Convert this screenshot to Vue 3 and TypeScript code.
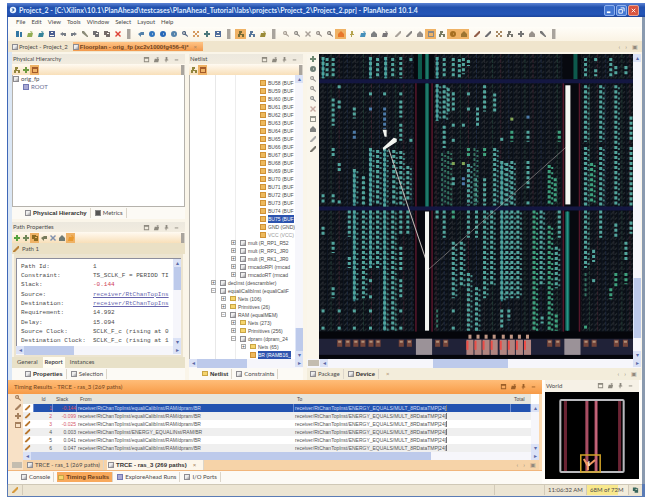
<script setup lang="ts">
type Tool = [icon: string, color: string, on?: boolean]
type Seg = [x: number, y1: number, y2: number, kind?: string]

const glyphs: Record<string, string> = {
  doc: 'M1 1h3v6H1zM5 2h2v5H5z',
  open: 'M1 7l1-4h5L6 7zM4 1l3 1-2 1z',
  save: 'M1 1h6v6H1zM3 2v1h2V2zM2 5v1h4V5z',
  undo: 'M1 4l3-2v1h3v3H5V5H4v1z',
  redo: 'M7 4L4 2v1H1v3h2V5h1v1z',
  pen: 'M1 1h2l4 5v1H6L1 3z',
  copy: 'M1 1h4v1h2v5H3V5H1zM4 3v1h2V3z',
  x: 'M1 2l1-1 2 2 2-2 1 1-2 2 2 2-1 1-2-2-2 2-1-1 2-2z',
  ball: 'M4 1a3 3 0 100 6 3 3 0 000-6zM4 3l1 1-1 1z',
  arrow: 'M1 4l3-2h3v3H4v2z',
  find: 'M3 1a2 2 0 100 4h1l3 2V6L5 4V2L4 1zM3 2l1 1-1 1-1-1z',
  grid: 'M1 1h2v2H1zM5 1h2v2H5zM3 3h2v2H3zM1 5h2v2H1zM5 5h2v2H5z',
  slash: 'M1 7V6l5-5h1v2L3 7z',
  home: 'M1 4l3-3 3 3v3H1z',
  tree: 'M2 1h3v2H4v1h3v3H5V5H3v2H1V4h1z',
  plus: 'M3 1h2v2h2v2H5v2H3V5H1V3h2z',
  box: 'M1 1h6v6H1zM2 3v3h4V3z',
  cube: 'M1 3l2-2h4v4L5 7H1zM2 4v2h2V4z',
  pin: 'M3 1h2v3h1v1H4v2H3V5H2V4h1z',
  min: 'M2 4h4v1H2z',
}

const bars: Tool[][] = [
  [['doc', '#3477a4'], ['open', '#92ad54'], ['open', '#37849a'], ['save', '#4c5f91'], ['undo', '#777d86'], ['redo', '#777d86'], ['pen', '#8b8b78'], ['copy', '#716f72'], ['copy', '#756b68'], ['x', '#dd4236']],
  [['arrow', '#5582aa'], ['ball', '#3275bd'], ['ball', '#2868b8'], ['ball', '#5482aa'], ['find', '#526580'], ['grid', '#d69a60'], ['plus', '#4b777b'], ['save', '#516d9b']],
  [['tree', '#756b35', true], ['tree', '#58779b'], ['open', '#9b8b37']],
  [['find', '#a9a096'], ['find', '#8e8b86'], ['x', '#aaa199'], ['find', '#968e87'], ['find', '#827c76'], ['home', '#e8762a', true], ['pin', '#b5a34d'], ['open', '#458fba'], ['home', '#7d7f80'], ['open', '#777477']],
  [['slash', '#a9a29a'], ['slash', '#898684'], ['home', '#928e8b'], ['box', '#888', true], ['tree', '#787b62'], ['ball', '#a66f20', true], ['home', '#9c7430', true]],
  [['slash', '#915d47'], ['slash', '#6d6d71'], ['grid', '#a78861'], ['tree', '#75756e'], ['plus', '#747474'], ['home', '#99928b'], ['pen', '#777']],
]
const menus = ['File', 'Edit', 'View', 'Tools', 'Window', 'Select', 'Layout', 'Help']
const paneIcons = ['box', 'open', 'pin', 'min']
const physTools: Tool[] = [['tree', '#91853d'], ['plus', '#6e9b42'], ['box', '#a45b2a', true]]
const netTools: Tool[] = [['tree', '#91853d'], ['box', '#a45b2a', true]]
const pathTools: Tool[] = [['plus', '#54a23e'], ['plus', '#71885a'], ['copy', '#8b6a20', true], ['arrow', '#777b5c'], ['x', '#8090ae'], ['home', '#707b75'], ['open', '#e9992f', true]]
const sideTools: Tool[] = [['plus', '#6d8872'], ['ball', '#718078'], ['find', '#9d9a95'], ['find', '#9d9a95'], ['find', '#8f9292'], ['x', '#c7aaa2'], ['box', '#94958d'], ['home', '#7f8180'], ['slash', '#aaa'], ['slash', '#77746c']]

interface Row { t: string; d: number; i: string; x?: string; on?: boolean; dim?: boolean }
const rows: Row[] = []
for (let n = 58; n <= 75; n++) rows.push({ t: `BU${n} (BUF`, d: 4, i: 'leaf', on: n === 75 })
rows.push(
  { t: 'GND (GND)', d: 4, i: 'leaf' },
  { t: 'VCC (VCC)', d: 4, i: 'leaf', dim: true },
  { t: 'mult (R_RP1_R52', d: 2, i: 'mod', x: '+' },
  { t: 'mult (R_RP1_JR0', d: 2, i: 'mod', x: '+' },
  { t: 'mult (R_RK1_JR0', d: 2, i: 'mod', x: '+' },
  { t: 'rmcadoRPI (rmcad', d: 2, i: 'mod', x: '+' },
  { t: 'rmcadoRT (rmcad', d: 2, i: 'mod', x: '+' },
  { t: 'decInst (descrambler)', d: 0, i: 'mod', x: '+' },
  { t: 'equaliCalibInst (equaliCaliF', d: 0, i: 'mod', x: '−' },
  { t: 'Nets (106)', d: 1, i: 'dir', x: '+' },
  { t: 'Primitives (26)', d: 1, i: 'dir', x: '+' },
  { t: 'RAM (equalMEM)', d: 1, i: 'mod', x: '−' },
  { t: 'Nets (273)', d: 2, i: 'dir', x: '+' },
  { t: 'Primitives (256)', d: 2, i: 'dir', x: '+' },
  { t: 'dpram (dpram_24', d: 2, i: 'mod', x: '−' },
  { t: 'Nets (65)', d: 3, i: 'dir', x: '+' },
  { t: 'BR (RAMB16_', d: 3, i: 'leaf', on: true },
)

const props: [string, string, string?][] = [
  ['Path Id:', '1'],
  ['Constraint:', 'TS_SCLK_F = PERIOD TI'],
  ['Slack:', '-0.144', 'neg'],
  ['Source:', 'receiver/RtChanTopIns', 'link'],
  ['Destination:', 'receiver/RtChanTopIns', 'link'],
  ['Requirement:', '14.992'],
  ['Delay:', '15.094'],
  ['Source Clock:', 'SCLK_F_c (rising at 0'],
  ['Destination Clock:', 'SCLK_F_c (rising at 1'],
]

const eq = 'receiver/RtChanTopInst/equaliCalibInst/RAM/dpram/BR'
const paths = [
  { id: 1, slack: '-0.144', from: eq },
  { id: 2, slack: '-0.099', from: eq },
  { id: 3, slack: '-0.025', from: eq },
  { id: 4, slack: '0.003', from: 'receiver/RtChanTopInst/ENERGY_EQUALINst/RAM/BR' },
  { id: 5, slack: '0.041', from: eq },
  { id: 6, slack: '0.047', from: eq },
]
const dest = 'receiver/RtChanTopInst/ENERGY_EQUALS/MULT_8RDataTMP[24]'

// Placed sites of the device, one entry per run of a tile column
const segs: Seg[] = [
  [4, 3, 24, 's'], [8, 4, 24], [14, 4, 24], [51, 3, 24, 's'], [58, 4, 23], [66, 3, 24, 's'], [73, 4, 24], [81, 3, 24], [91, 4, 7], [117, 3, 24, 's'], [124, 4, 24], [133, 4, 24], [139, 5, 24], [143, 4, 20], [148, 6, 12],
  [264, 4, 22], [274, 4, 7], [274, 15, 22], [289, 4, 22], [294, 12, 22], [304, 12, 22],
  [14, 44, 71], [14, 93, 101], [14, 139, 148], [4, 139, 147], [20, 31, 36], [20, 46, 56], [20, 108, 117], [20, 145, 149],
  [35, 53, 64], [35, 76, 86, 'b'], [35, 114, 150, 's'], [44, 121, 150], [51, 38, 41], [51, 53, 56, 'b'], [51, 93, 150, 's'], [58, 95, 150], [65, 38, 41], [65, 53, 74, 'b'], [65, 93, 151, 's'], [74, 95, 150], [81, 38, 41], [81, 46, 63], [81, 69, 86], [81, 96, 150], [88, 111, 144], [91, 84, 87],
  [117, 30, 66, 's'], [124, 31, 66], [128, 34, 58], [124, 71, 93], [122, 98, 150, 'f'], [128, 96, 150, 'f'], [133, 38, 56], [133, 69, 72], [133, 84, 87], [133, 107, 111, 'y'], [133, 122, 131], [143, 69, 73], [143, 107, 111, 'y'], [143, 122, 131, 'b'], [148, 38, 42], [148, 53, 57], [148, 93, 103, 'g'], [148, 109, 150], [155, 123, 149],
  [157, 53, 71], [154, 93, 150, 'f'], [164, 31, 57], [164, 93, 103, 'g'], [164, 123, 150], [174, 39, 57], [174, 93, 150], [181, 83, 87], [181, 106, 150, 's'], [186, 108, 150], [191, 63, 66, 'y'], [191, 76, 87, 'g'], [191, 106, 150], [207, 61, 65, 'b'], [207, 76, 87], [207, 106, 133], [207, 146, 149], [228, 110, 150, 'g'], [234, 123, 148, 'g'], [238, 76, 87, 'g'],
  [264, 31, 87], [264, 92, 150], [270, 108, 148, 'g'], [279, 31, 87], [279, 92, 150], [294, 31, 150], [309, 62, 87], [309, 92, 150],
  [4, 171, 179], [4, 253, 257], [4, 270, 273], [14, 186, 197], [14, 231, 242], [20, 253, 257], [20, 270, 273], [30, 155, 181], [30, 201, 212], [35, 155, 245, 's'], [44, 155, 242], [51, 155, 212, 's'], [51, 223, 227], [51, 239, 242], [51, 253, 257], [51, 270, 273], [58, 155, 212], [65, 155, 274, 's'], [73, 155, 274], [81, 155, 180], [81, 191, 216], [81, 223, 242], [81, 253, 256], [81, 270, 273], [88, 155, 180], [35, 253, 257], [35, 270, 273],
  [117, 155, 165], [117, 253, 273, 'f'], [124, 155, 182], [133, 155, 163, 'g'], [133, 186, 242], [141, 186, 230], [133, 253, 257], [133, 270, 273], [148, 155, 182], [148, 217, 274], [156, 155, 182], [156, 231, 274], [164, 155, 242], [171, 155, 230], [181, 155, 245, 's'], [186, 155, 242], [191, 155, 242], [181, 253, 273], [188, 253, 264], [197, 155, 242], [213, 155, 274, 'g'], [220, 155, 228], [221, 260, 267], [228, 170, 274, 'g'], [235, 191, 232], [235, 258, 274, 'g'], [238, 155, 182],
  [264, 155, 212], [272, 194, 206], [272, 223, 227], [264, 217, 242, 'f'], [264, 269, 273, 'g'], [279, 155, 182], [294, 168, 182], [304, 186, 206], [294, 217, 230, 'g'], [304, 217, 228, 'g'], [289, 232, 243, 'g'], [309, 166, 178],
]
const dimCols = Array.from({ length: 39 }, (_, i) => ({ x: 4 + i * 8, c: ['#2c2d34', '#202c46', '#402532', '#244139'][(i * 7) % 4] }))
const stubs = [20, 28, 36, 43, 51, 58, 81, 89, 117, 125, 228, 236, 264, 272, 294, 303]
const ioBlocks = [146, 154, 162, 170, 179, 187, 195, 203]
</script>

<template>
  <div class="window">
    <header class="title">
      <svg class="logo" viewBox="0 0 10 10"><circle cx="5" cy="5" r="4" fill="#e9f2ff" /><path d="M3 3h3l1 2-2 2H3l2-2z" fill="#3768a8" /></svg>
      <h1>Project_2 - [C:\Xilinx\10.1\PlanAhead\testcases\PlanAhead_Tutorial\labs\projects\Project_2\Project_2.ppr] - PlanAhead 10.1.4</h1>
      <button class="wb" aria-label="Minimize"><svg viewBox="0 0 8 8"><path d="M1 6h4" stroke="#fff" stroke-width="2" /></svg></button>
      <button class="wb" aria-label="Restore"><svg viewBox="0 0 8 8"><path d="M3 1h4v4M1 3h4v4H1z" stroke="#fff" fill="none" /></svg></button>
      <button class="wb close" aria-label="Close"><svg viewBox="0 0 8 8"><path d="M2 2l4 4M6 2L2 6" stroke="#fff" stroke-width="1" /></svg></button>
    </header>
    <nav class="menu"><button v-for="m in menus" :key="m">{{ m }}</button></nav>
    <div class="toolbar">
      <template v-for="(bar, b) in bars" :key="b">
        <div class="group">
          <button v-for="(t, i) in bar" :key="i" class="tool" :class="{ on: t[2] }" :aria-label="t[0]"><svg viewBox="0 0 8 8"><path :d="glyphs[t[0]]" :fill="t[1]" fill-rule="evenodd" /></svg></button>
        </div>
        <i v-if="b !== 3 && b !== 4" class="grip"></i>
      </template>
    </div>
    <div class="doctabs">
      <button class="doctab"><i class="ico mod"></i>Project - Project_2</button>
      <button class="doctab sel"><i class="ico mod"></i>Floorplan - orig_fp (xc2v1000fg456-4)* <span class="cx">×</span></button>
      <span class="nav"><b>‹</b><b>›</b><b>▣</b></span>
    </div>

    <main class="work">
      <div class="left">
        <section class="pane phys">
          <header class="phead"><h2>Physical Hierarchy</h2><button v-for="p in paneIcons" :key="p" class="pi" :aria-label="p"><svg viewBox="0 0 8 8"><path :d="glyphs[p]" fill="#8d897f" fill-rule="evenodd" /></svg></button></header>
          <div class="ptools"><button v-for="(t, i) in physTools" :key="i" class="tool" :class="{ on: t[2] }" :aria-label="t[0]"><svg viewBox="0 0 8 8"><path :d="glyphs[t[0]]" :fill="t[1]" fill-rule="evenodd" /></svg></button><i class="grip end"></i></div>
          <ul class="list"><li><i class="ico mod"></i>orig_fp</li><li class="child"><i class="ico root"></i>ROOT</li></ul>
          <div class="tabs"><button class="tab cur"><i class="ico mod"></i>Physical Hierarchy</button><button class="tab"><i class="ico dark"></i>Metrics</button></div>
        </section>
        <section class="pane path">
          <header class="phead"><h2>Path Properties</h2><button v-for="p in paneIcons" :key="p" class="pi" :aria-label="p"><svg viewBox="0 0 8 8"><path :d="glyphs[p]" fill="#8d897f" fill-rule="evenodd" /></svg></button></header>
          <div class="ptools"><button v-for="(t, i) in pathTools" :key="i" class="tool" :class="{ on: t[2] }" :aria-label="t[0]"><svg viewBox="0 0 8 8"><path :d="glyphs[t[0]]" :fill="t[1]" fill-rule="evenodd" /></svg></button><i class="grip end"></i></div>
          <div class="pname"><svg viewBox="0 0 8 8"><path :d="glyphs.slash" fill="#b98138" /></svg>Path 1</div>
          <div class="card">
            <div class="report">
              <dl><template v-for="p in props" :key="p[0]"><dt>{{ p[0] }}</dt><dd :class="p[2]"><a v-if="p[2] === 'link'" href="#">{{ p[1] }}</a><template v-else>{{ p[1] }}</template></dd></template></dl>
              <div class="vs"><i class="ar">▴</i><i class="th"></i><i class="sp"></i><i class="ar">▾</i></div>
            </div>
            <div class="hs"><i class="ar">◂</i><i class="th"></i><i class="sp"></i><i class="ar">▸</i></div>
          </div>
          <div class="subtabs"><button>General</button><button class="cur">Report</button><button>Instances</button></div>
          <div class="tabs"><button class="tab cur"><i class="ico mod"></i>Properties</button><button class="tab"><i class="ico mod"></i>Selection</button></div>
        </section>
      </div>

      <section class="pane net">
        <header class="phead"><h2>Netlist</h2><button v-for="p in paneIcons" :key="p" class="pi" :aria-label="p"><svg viewBox="0 0 8 8"><path :d="glyphs[p]" fill="#8d897f" fill-rule="evenodd" /></svg></button></header>
        <div class="ptools"><button v-for="(t, i) in netTools" :key="i" class="tool" :class="{ on: t[2] }" :aria-label="t[0]"><svg viewBox="0 0 8 8"><path :d="glyphs[t[0]]" :fill="t[1]" fill-rule="evenodd" /></svg></button><i class="grip end"></i></div>
        <div class="treebox">
          <ul class="tree">
            <li v-for="(r, i) in rows" :key="i" :class="['d' + r.d, { dim: r.dim }]"><span class="ex" :class="{ has: r.x }">{{ r.x }}</span><i class="ico" :class="r.i"></i><span class="lb" :class="{ on: r.on }">{{ r.t }}</span></li>
          </ul>
          <div class="vs low"><i class="ar">▴</i><i class="sp"></i><i class="th"></i><i class="ar">▾</i></div>
        </div>
        <div class="hs"><i class="ar">◂</i><i class="th"></i><i class="sp"></i><i class="ar">▸</i></div>
        <div class="tabs"><button class="tab cur"><i class="ico dir"></i>Netlist</button><button class="tab"><i class="ico mod"></i>Constraints</button></div>
      </section>

      <section class="device">
        <div class="dbody">
          <div class="side"><button v-for="(t, i) in sideTools" :key="i" class="tool" :aria-label="t[0]"><svg viewBox="0 0 8 8"><path :d="glyphs[t[0]]" :fill="t[1]" fill-rule="evenodd" /></svg></button></div>
          <div class="cwrap">
            <svg class="fabric" viewBox="0 0 311 302" preserveAspectRatio="none">
              <defs>
                <pattern id="tile" width="8" height="5" patternUnits="userSpaceOnUse"><rect width="8" height="5" fill="#0a0f16" /><path d="M1 4l3-3M5 4l2-2" stroke="#2b3136" stroke-width="1" /><path d="M0 0v5" stroke="#131b2c" /></pattern>
              </defs>
              <rect width="311" height="302" fill="url(#tile)" />
              <path v-for="c in dimCols" :key="c.x" :d="`M${c.x} 0V276`" :stroke="c.c" stroke-width="1" stroke-dasharray="4 1" opacity=".8" />
              <g fill="#07090f"><rect x="94" width="20" height="276" /><rect x="241" width="19" height="276" /></g>
              <g stroke="#56172b" stroke-width="1.5"><path d="M96 28V276M112 28V276M242 28V276M258 28V276" /></g>
              <g stroke="#0d594c"><path d="M100 0V25M107 0V25" stroke-width="4" /><path d="M107 29V152" stroke-width="4" /><path d="M254 0V25" stroke-width="4" /><path d="M246 156V274" stroke-width="4" stroke="#14766a" /><path d="M107 0V152M246 156V274" stroke="#329889" stroke-width="1" /></g>
              <g fill="#141742"><rect y="25" width="311" height="4" /><rect y="151" width="311" height="4" /></g>
              <g v-for="(s, i) in segs" :key="i" :class="s[3] || 'd'">
                <path v-if="s[3] === 's'" class="line" :d="`M${s[0]} ${s[1]}V${s[2]}`" />
                <path class="dots" :d="`M${s[0]} ${s[1]}V${s[2]}`" />
                <path v-if="s[2] - s[1] > 30" class="dots faint" :d="`M${s[0] + 3} ${s[1] + 2}V${s[2]}`" />
              </g>
              <rect y="275" width="311" height="27" fill="#05060b" /><rect y="282" width="311" height="16" fill="#202238" />
              <g v-for="x in stubs" :key="'s' + x"><rect :x="x - 2" y="283" width="5" height="7" fill="#75453a" /><rect :x="x - 1" y="284" width="3" height="2" fill="#b08f78" /></g>
              <g v-for="x in ioBlocks" :key="'b' + x"><rect :x="x" y="283" width="7" height="15" fill="#b08580" /><path :d="`M${x + 1} 284v9`" stroke="#ec4e48" stroke-width="2" /><rect :x="x + 2" y="278" width="3" height="4" fill="#c09684" /></g>
              <g fill="#9b9298"><rect x="96" y="282" width="16" height="16" /><rect x="243" y="282" width="16" height="16" /></g>
              <g stroke="#c3bdb9" fill="none"><path d="M69 94L109 213" stroke-width="1" /><path d="M109 213L245 92" stroke-width=".8" opacity=".6" /></g>
              <g fill="#f4f6f2"><rect x="105" y="156" width="4" height="118" /><rect x="244" y="31" width="5" height="118" /><path d="M63 75h4v7h-2zM63 93l11-10 3 1v3l-8 5-5 3z" /></g>
            </svg>
            <div class="vs low"><i class="ar">▴</i><i class="sp"></i><i class="th"></i><i class="sp2"></i><i class="ar">▾</i></div>
          </div>
        </div>
        <div class="hs dh"><i class="knob"></i><i class="ar">◂</i><i class="sp"></i><i class="th"></i><i class="sp wide"></i><i class="ar">▸</i></div>
        <div class="tabs dtabs"><button class="tab"><i class="ico mod"></i>Package</button><button class="tab cur"><i class="ico mod"></i>Device</button><span class="cx">×</span><span class="nav"><b>‹</b><b>›</b><b>▣</b></span></div>
      </section>
    </main>

    <div class="bottom">
      <section class="timing">
        <header class="phead hot"><h2>Timing Results - TRCE - ras_3 (269 paths)</h2><button v-for="p in paneIcons" :key="p" class="pi" :aria-label="p"><svg viewBox="0 0 8 8"><path :d="glyphs[p]" fill="#9a5e28" fill-rule="evenodd" /></svg></button></header>
        <div class="tbody">
          <div class="tside"><button v-for="g in ['find', 'slash', 'plus', 'box']" :key="g" class="tool" :aria-label="g"><svg viewBox="0 0 8 8"><path :d="glyphs[g]" fill="#a5805e" fill-rule="evenodd" /></svg></button><i class="knob"></i></div>
          <div class="tmain">
            <div class="tscroll">
              <table>
                <thead><tr><th class="c0"></th><th class="c1">Id</th><th class="c2">Slack</th><th class="c3">From</th><th class="c4">To</th><th class="c5">Total</th></tr></thead>
                <tbody><tr v-for="p in paths" :key="p.id" :class="{ sel: p.id === 1 }"><td class="mk"><svg viewBox="0 0 8 8"><path :d="glyphs.slash" fill="#b9772e" /></svg></td><td class="n" :class="{ neg: p.id < 4 }">{{ p.id }}</td><td class="n" :class="{ neg: p.id < 4 }">{{ p.slack }}</td><td>{{ p.from }}</td><td><span class="to">{{ dest }}</span></td><td></td></tr></tbody>
              </table>
              <div class="vs tv"><i class="ar">▴</i><i class="sp"></i><i class="ar">▾</i></div>
            </div>
            <div class="hs"><i class="ar">◂</i><i class="th"></i><i class="sp"></i><i class="ar">▸</i></div>
            <div class="rtabs"><button class="tab"><i class="ico mod"></i>TRCE - ras_1 (269 paths)</button><button class="tab cur"><i class="ico mod"></i>TRCE - ras_3 (269 paths) <span class="cx">×</span></button><span class="nav"><b>‹</b><b>›</b><b>▣</b></span></div>
          </div>
        </div>
        <div class="tabs btabs"><button class="tab"><i class="ico mod"></i>Console</button><button class="tab cur hotc"><i class="ico dir"></i>Timing Results</button><button class="tab"><i class="ico root"></i>ExploreAhead Runs</button><button class="tab"><i class="ico mod"></i>I/O Ports</button></div>
      </section>
      <section class="world">
        <header class="phead"><h2>World</h2><button v-for="p in paneIcons" :key="p" class="pi" :aria-label="p"><svg viewBox="0 0 8 8"><path :d="glyphs[p]" fill="#8d897f" fill-rule="evenodd" /></svg></button></header>
        <svg class="mini" viewBox="0 0 92 87" preserveAspectRatio="none">
          <rect width="92" height="87" fill="#000" /><path d="M20 8V79M73 8V79" stroke="#6b2434" stroke-width="3" /><path d="M41 8V79M50 8V79" stroke="#a84c62" stroke-width="3" /><path d="M50 8V79" stroke="#d7798c" />
          <rect x="15" y="8" width="62" height="72" rx="1" fill="none" stroke="#b9b9bd" stroke-width="2" /><rect x="35" y="63" width="19" height="17" fill="none" stroke="#d0a126" stroke-width="1.5" /><path d="M38 67l4 7 7-6M42 70v8" stroke="#ef9a62" fill="none" stroke-width="2" /><path d="M43 69v5" stroke="#fff" />
        </svg>
      </section>
    </div>
    <footer class="status"><span class="s0"><svg viewBox="0 0 8 8"><path :d="glyphs.slash" fill="#d79a3c" /></svg></span><span class="s1"></span><span class="s2"></span><span class="s3">11:06:32 AM</span><span class="mem">68M of 72M</span><span class="s4"><svg viewBox="0 0 8 8"><path :d="glyphs.copy" fill="#37665c" fill-rule="evenodd" /></svg></span></footer>
  </div>
</template>

<style>
body { background: #fff; }
</style>
<style scoped>
* { box-sizing: border-box; }
.window { min-height: 100vh; border: solid #fff; border-width: 3px 3px 1px 7px; display: flex; flex-direction: column; font: 6px/8px Lato, "Liberation Sans", sans-serif; color: #4c4b4b; background: #fdfbf6; overflow: hidden; }
button { border: 0; padding: 0; margin: 0; background: none; font: inherit; color: inherit; white-space: nowrap; display: flex; align-items: center; }
h1, h2, ul, dl, dd { margin: 0; padding: 0; list-style: none; }
i { font-style: normal; }
svg { display: block; }
.title { height: 14px; background: linear-gradient(#5c83d4, #2251ae 30%, #2455b7 80%, #1c449a); display: flex; align-items: center; padding: 0 6px 0 2px; gap: 1px; }
.title h1 { font: bold 7px/12px Lato, "Liberation Sans", sans-serif; color: #dfe9fb; flex: 1; white-space: nowrap; margin-left: 1px; }
.logo { width: 8px; height: 8px; }
.wb { width: 11px; height: 11px; border: 1px solid #8eb0ee; border-radius: 2px; background: #4477d2; justify-content: center; }
.wb svg { width: 7px; height: 7px; }
.wb.close { background: #d9553f; border-color: #e3a397; }
.menu { height: 10px; padding-left: 8px; display: flex; gap: 6px; border-left: 1px solid #3f68b8; border-right: 3px solid #8a9aaf; }
.toolbar { height: 14px; padding-left: 5px; display: flex; align-items: center; border-left: 1px solid #3f68b8; border-right: 3px solid #8a9aaf; background: linear-gradient(#fffdf8, #faf3e4); }
.group { display: flex; margin-right: 2px; }
.tool { width: 11px; height: 10px; justify-content: center; flex: none; }
.tool svg { width: 8px; height: 8px; }
.tool.on { background: #efb265; }
.grip { width: 4px; height: 10px; margin: 0 4px 0 2px; background: #a9a49d; border-right: 1px solid #d5d0c7; flex: none; }
.grip.end { margin: 0 0 0 auto; }
.doctabs { height: 11px; background: #f0e5cd; display: flex; align-items: center; border-left: 1px solid #3f68b8; border-right: 3px solid #8a9aaf; padding: 0 4px; gap: 3px; }
.doctab { height: 9px; gap: 1px; padding-right: 2px; }
.doctab.sel { background: linear-gradient(#ffc486, #f2994c); font-weight: bold; font-family: "Liberation Sans", sans-serif; color: #71441e; }
.cx { font-weight: normal; padding: 0 4px; color: #a78360; }
.nav { margin-left: auto; display: flex; gap: 5px; color: #91897e; }
.nav b { font-weight: normal; }
.ico { width: 6px; height: 6px; border: 1px solid #8d8c91; background: #dedfe5; flex: none; display: inline-block; }
.ico.leaf { background: #edb95d; border-color: #d09235; }
.ico.dir { background: #f6d56d; border-color: #c9a544; height: 5px; }
.ico.root { background: #aaa9d3; border-color: #7278b3; }
.ico.dark { background: #555; border-color: #888; }
.ico.mod { background: linear-gradient(135deg, #eee 45%, #98979a); }
.work { flex: 1; display: flex; min-height: 0; border-left: 1px solid #3f68b8; border-right: 3px solid #8a9aaf; padding: 2px 1px 0 4px; box-shadow: inset 4px 0 #dbe7f5; background: #faf5e9; gap: 4px; }
.left { width: 173px; display: flex; flex-direction: column; gap: 3px; }
.pane { display: flex; flex-direction: column; }
.phead { height: 10px; display: flex; align-items: center; padding: 0 4px 0 1px; background: linear-gradient(#ece8de, #f2ecdf); }
.phead h2 { font: inherit; flex: 1; white-space: nowrap; }
.pi { width: 10px; justify-content: center; }
.pi svg { width: 7px; height: 7px; }
.ptools { height: 11px; display: flex; align-items: center; background: linear-gradient(#fffaf1, #f8dfb9); }
.ptools .tool { width: 9px; }
.list { flex: 1; background: #fff; border: 1px solid #b5b2ac; border-top: 0; }
.phys { height: 165px; flex: none; }
.path { flex: 1; min-height: 0; }
.list li, .tree li { display: flex; align-items: center; gap: 2px; height: 8px; white-space: nowrap; }
.list .child { padding-left: 10px; color: #696a91; }
.tabs { height: 12px; background: #fcfaf5; display: flex; align-items: center; padding-left: 12px; gap: 3px; flex: none; }
.tab { height: 10px; gap: 2px; padding: 0 3px 0 1px; border-right: 1px solid #dcd6ca; }
.tab.cur { font-weight: bold; font-family: "Liberation Sans", sans-serif; color: #333; }
.pname { height: 11px; display: flex; align-items: center; gap: 2px; background: #eae0c5; }
.pname svg, .s0 svg, .s4 svg { width: 8px; height: 8px; }
.card { flex: 1; display: flex; flex-direction: column; margin: 0 2px; border: solid #ece4d0; border-width: 4px 2px 2px; background: #fff; min-height: 0; }
.report { flex: 1; display: flex; border: 1px solid #8c8d9c; border-width: 1px 0 0 1px; min-height: 0; }
dl { flex: 1; width: 0; display: grid; grid-template-columns: 72px 1fr; grid-template-rows: repeat(9, 1fr); align-items: center; font: 6px/8px "Liberation Mono", monospace; padding: 3px 0 0 4px; white-space: nowrap; }
.neg { color: #ce4058; }
a { color: #6865ad; }
.vs { width: 8px; display: flex; flex-direction: column; background: #f6f6fb; flex: none; }
.hs { height: 9px; display: flex; background: #f6f6fb; flex: none; }
.ar { width: 8px; height: 8px; line-height: 8px; text-align: center; background: #dbe2f6; color: #5a69a6; flex: none; }
.th { background: #bdcaeb; }
.sp { flex: 1; }
.vs .th { height: 23px; border-left: 1px solid #dfe6f8; }
.hs .th { width: 50px; }
.subtabs { height: 11px; display: flex; gap: 5px; padding-left: 5px; background: #e8e1c8; }
.subtabs .cur { font-weight: bold; background: #fffdf3; padding: 0 2px; }
.net { width: 114px; flex: none; }
.treebox { flex: 1; display: flex; height: 0; background: #fff; border-left: 1px solid #b5b2ac; }
.tree { flex: 1; width: 0; display: flex; flex-direction: column; justify-content: flex-end; font-size: 5px; font-family: "Liberation Sans", sans-serif; background: linear-gradient(90deg, transparent 25px, #e8e8e8 25px, #e8e8e8 26px, transparent 26px, transparent 45px, #ededed 45px, #ededed 46px, transparent 46px); }
.tree li { flex: none; }
.ex { width: 5px; height: 5px; font-size: 5px; text-align: center; margin-right: 2px; flex: none; }
.ex.has { border: 1px solid #aaa; line-height: 3px; }
.lb.on { background: #2c53ae; color: #fff; }
.dim { color: #999; }
.d0 { padding-left: 21px; }
.d1 { padding-left: 31px; }
.d2 { padding-left: 41px; }
.d3 { padding-left: 51px; }
.d4 { padding-left: 61px; }
.device { flex: 1; display: flex; flex-direction: column; min-width: 0; }
.dbody { flex: 1; display: flex; min-height: 0; }
.side { width: 12px; background: #faf6ec; display: flex; flex-direction: column; }
.cwrap { flex: 1; display: flex; min-width: 0; }
.fabric { flex: 1; width: 0; height: 100%; min-height: 0; }
.cwrap .vs.low .th { height: 60px; }
.sp2 { height: 13px; }
.sp.wide { flex-grow: 1.2; }
.knob { width: 11px; height: 6px; background: #c4bdb0; margin: 1px; flex: none; }
.dh .th { width: 75px; }
.dtabs { background: #f3eddb; padding: 0 4px 0 2px; }
.line { stroke: #2c7f88; stroke-width: 2; fill: none; }
.dots { stroke: #52a59d; stroke-width: 3; stroke-dasharray: 3 2; fill: none; }
.dots.faint { stroke: #43817e; stroke-width: 2; stroke-dasharray: 2 3; }
.g .dots { stroke: #3ea17d; }
.b .dots { stroke: #4c7aa8; }
.y .dots { stroke: #83a656; }
.f .dots { stroke: #33705f; stroke-width: 2; }
.bottom { display: flex; height: 104px; flex: none; border-left: 1px solid #3f68b8; border-right: 3px solid #8a9aaf; background: #fffdf9; gap: 3px; padding-right: 3px; }
.timing { flex: 1; min-width: 0; display: flex; flex-direction: column; }
.hot { height: 14px; background: linear-gradient(#ffbd78, #f79b47); padding-left: 6px; color: #714623; }
.tbody { flex: 1; display: flex; min-height: 0; background: #fbd9b0; padding-right: 3px; border-bottom: 1px solid #f1b67c; }
.tside { width: 15px; padding-left: 4px; display: flex; flex-direction: column; background: #f8e1c6; }
.tside .tool { height: 9px; }
.tside .knob { margin: auto 0 2px; width: 10px; }
.tmain { flex: 1; width: 0; display: flex; flex-direction: column; }
.tscroll { display: flex; height: 58px; background: #fff; }
table { flex: 1; width: 0; min-width: 0; table-layout: fixed; border-collapse: collapse; font-size: 5px; font-family: "Liberation Sans", sans-serif; }
th { height: 10px; background: #e6e5dc; font-weight: normal; text-align: left; padding: 0 3px; }
.c0 { width: 11px; }
.c1 { width: 19px; text-align: center; }
.c2 { width: 24px; }
.c3 { width: 217px; }
.c5 { width: 20px; }
td { height: 8px; padding: 0 1px; line-height: 8px; white-space: nowrap; color: #545454; }
tbody tr:nth-child(even) { background: #efefef; }
tbody .sel td { background: #2353b0; color: #cfdcf7; box-shadow: inset -1px 0 #6f8fd0; }
tbody .sel .mk { background: #fff; }
.mk svg { width: 7px; height: 7px; }
td.n { text-align: right; }
tbody td.neg { color: #d4566a; }
.to { border-right: 1px solid #777; }
.tv { margin-top: 10px; }
.timing .hs { height: 8px; }
.timing .hs .th { width: 400px; }
.rtabs { height: 10px; display: flex; align-items: center; gap: 3px; background: #f6d3a8; padding: 0 3px; margin-top: auto; }
.rtabs .cur { background: #fdf6ea; }
.btabs { height: 13px; }
.hotc.cur { background: #f8a95c; color: #6d3f18; }
.world { width: 94px; display: flex; flex-direction: column; }
.world .phead { height: 12px; background: #f6f1e6; }
.mini { width: 100%; height: 87px; }
.status { height: 13px; flex: none; display: flex; align-items: center; background: #ece5d3; border: solid #5a7bb5; border-width: 0 3px 1px 1px; box-shadow: inset 0 1px #cfc8b6; }
.status span { height: 10px; display: flex; align-items: center; border-left: 1px solid #d2cab8; padding: 0 3px; white-space: nowrap; }
.status .s0 { width: 14px; border: 0; }
.s1 { flex: 1; }
.s2 { width: 50px; }
.s3 { width: 42px; }
.status .mem { width: 42px; background: linear-gradient(90deg, #f8e88c 75%, #f3eddb 75%); }
.s4 { width: 14px; }
</style>
